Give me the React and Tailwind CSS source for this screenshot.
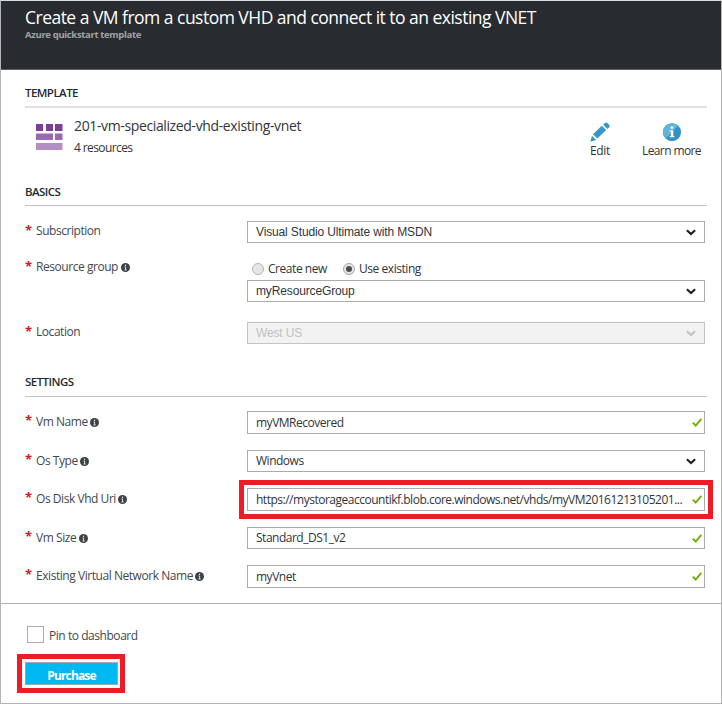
import React from "react";

function InfoDot() {
  return (
    <svg className="ml-[2.5px] h-[9px] w-[9px] shrink-0" viewBox="0 0 9 9">
      <circle cx="4.5" cy="4.5" r="4.5" fill="#3c4247" />
      <path d="M3.5 3.9H4.6V6.9M3.4 7H5.7" stroke="#fff" strokeWidth="0.8" fill="none" />
      <rect x="4" y="1.7" width="1.1" height="1.2" fill="#fff" />
    </svg>
  );
}

function Chevron({ color = "#1c2127" }) {
  return (
    <svg className="mr-2 h-[7px] w-[10px] shrink-0" viewBox="0 0 10 7">
      <path d="M0.9 1.2L5 5L9.1 1.2" fill="none" stroke={color} strokeWidth="2.2" />
    </svg>
  );
}

function Check() {
  return (
    <svg className="mr-[2px] h-[9px] w-[10px] shrink-0" viewBox="0 0 10 9">
      <path d="M0.8 4.6L3.7 7.5L9.3 0.9" fill="none" stroke="#6fb000" strokeWidth="1.9" />
    </svg>
  );
}

function Label({ children, info, low }) {
  return (
    <div
      className={`flex h-[18px] w-[222px] shrink-0 items-center whitespace-nowrap leading-[18px] tracking-[-0.45px] text-[#44484d] ${
        low ? "mt-[2px]" : "mt-px"
      }`}
    >
      <span className={`w-[11px] shrink-0 self-start text-[13px] font-bold text-[#e81123] ${low ? "leading-[15px]" : "leading-4"}`}>*</span>
      <span>{children}</span>
      {info && <InfoDot />}
    </div>
  );
}

function Box({ children, icon, tall, arial, disabled }) {
  return (
    <div
      className={`flex w-[458px] shrink-0 items-center justify-between border pl-2 ${tall ? "h-[23px]" : "h-[22px]"} ${
        disabled ? "border-[#c4c4c4] bg-[#f2f2f2] text-[#c0c2c4]" : "border-[#a9abad] bg-white text-[#30353b]"
      }`}
    >
      <span
        className={`whitespace-nowrap leading-5 ${
          arial ? "font-['Liberation_Sans',sans-serif] text-[12px] tracking-[-0.14px]" : "tracking-[-0.49px]"
        }`}
      >
        {children}
      </span>
      {icon}
    </div>
  );
}

function Heading({ children }) {
  return <h2 className="text-[11.5px] leading-4 font-semibold tracking-[-0.55px] text-[#24292e]">{children}</h2>;
}

export default function App() {
  return (
    <div className="flex h-[704px] w-[722px] flex-col overflow-hidden border border-[#b4b4b4] border-t-[#d5dcdc] bg-white font-['Open_Sans',sans-serif] text-[12px]">
      <header className="h-[69px] shrink-0 border-b border-[#5d6265] bg-[#282c30] pl-6 pt-1">
        <h1 className="text-[17.5px] leading-6 tracking-[-0.52px] text-white">Create a VM from a custom VHD and connect it to an existing VNET</h1>
        <p className="text-[9.5px] leading-[12px] font-bold tracking-[-0.35px] text-[#a0a4a6]">Azure quickstart template</p>
      </header>

      <main className="h-[533px] shrink-0 pl-6">
        <section>
          <div className="h-[38px] w-[682px] border-b-2 border-[#e2e2e2] pt-[15px]">
            <Heading>TEMPLATE</Heading>
          </div>
          <div className="flex h-[75px] items-start pl-[11px] pt-[9px]">
            <svg className="mt-[7px] h-[26px] w-[27px]" viewBox="0 0 27 26">
              <path d="M0 0h7v7H0zM10 0h7v7H10zM19 0h7.5v7H19z" fill="#7b3f98" />
              <path d="M0 9.5h17v6.5H0zM19 9.5h7.5v6.5H19z" fill="#9c68b0" />
              <path d="M0 19h26.5v7H0z" fill="#b48fc4" />
            </svg>
            <div className="ml-[11px] w-[506px] text-[#30353b]">
              <div className="text-[14px] leading-[18px] tracking-[-0.37px]">201-vm-specialized-vhd-existing-vnet</div>
              <div className="mt-1 leading-[18px] tracking-[-0.6px]">4 resources</div>
            </div>
            <div className="mt-[5px] flex w-[40px] flex-col items-center text-[#30353b]">
              <svg className="h-5 w-5" viewBox="0 0 20 20" fill="#3598cc">
                <path d="M0.3 19.7L2 13.7L6 18Z" />
                <path d="M3 12.2L11.8 3.8L16.2 8L7.4 16.6Z" />
                <path d="M13.1 2.7L15 0.9Q16.2 0 17.4 1L19.3 3Q20.2 4.2 19.2 5.3L17.4 7Z" />
              </svg>
              <span className="leading-[18px] tracking-[-0.3px]">Edit</span>
            </div>
            <div className="mt-[5px] ml-[12px] flex w-[79px] flex-col items-center whitespace-nowrap text-[#30353b]">
              <svg className="h-5 w-5" viewBox="0 0 20 20">
                <circle cx="10" cy="10.2" r="9" fill="#2f92c6" />
                <path d="M3.6 16.6A9 9 0 0 1 16.4 3.8Z" fill="#5fb4dc" />
                <circle cx="10" cy="5.6" r="1.4" fill="#fff" />
                <path d="M7.8 8.2H11.3V14H12.4V15.2H7.7V14H8.8V9.4H7.8Z" fill="#fff" />
              </svg>
              <span className="leading-[18px] tracking-[-0.6px]">Learn more</span>
            </div>
          </div>
        </section>

        <section>
          <div className="h-[23px] w-[682px] border-b border-[#c4c4c4] pt-px">
            <Heading>BASICS</Heading>
          </div>
          <div className="flex pt-[15px]">
            <Label>Subscription</Label>
            <Box arial icon={<Chevron />}>Visual Studio Ultimate with MSDN</Box>
          </div>
          <div className="mt-[14px] flex">
            <Label info>Resource group</Label>
            <div>
              <div className="flex h-[23px] items-center pl-[5px] tracking-[-0.45px] text-[#30353b]">
                <span className="h-3 w-3 rounded-full border border-[#b4b4b4] bg-[#e6e6e6]" />
                <span className="ml-1 w-[75px]">Create new</span>
                <span className="flex h-3 w-3 items-center justify-center rounded-full border border-[#a4a4a4] bg-[#e6e6e6]">
                  <span className="h-1.5 w-1.5 rounded-full bg-[#4c4c4c]" />
                </span>
                <span className="ml-1">Use existing</span>
              </div>
              <Box arial icon={<Chevron />}>myResourceGroup</Box>
            </div>
          </div>
          <div className="mt-5 flex">
            <Label>Location</Label>
            <Box arial disabled icon={<Chevron color="#c2c4c6" />}>West US</Box>
          </div>
        </section>

        <section>
          <div className="h-[53px] w-[682px] border-b border-[#c4c4c4] pt-[30px]">
            <Heading>SETTINGS</Heading>
          </div>
          <div className="flex h-[53px] pt-[14px]">
            <Label low info>Vm Name</Label>
            <Box tall icon={<Check />}>myVMRecovered</Box>
          </div>
          <div className="flex h-[38px]">
            <Label low info>Os Type</Label>
            <Box icon={<Chevron />}>Windows</Box>
          </div>
          <div className="flex h-[39px]">
            <Label low info>Os Disk Vhd Uri</Label>
            <div className="-ml-2 -mt-2 h-[39px] w-[474px] shrink-0 border-[5px] border-[#ee1c25] pl-[3px] pt-[3px]">
              <Box tall icon={<Check />}>https://mystorageaccountikf.blob.core.windows.net/vhds/myVM20161213105201...</Box>
            </div>
          </div>
          <div className="flex h-[38px]">
            <Label low info>Vm Size</Label>
            <Box icon={<Check />}>Standard_DS1_v2</Box>
          </div>
          <div className="flex h-[38px]">
            <Label low info>Existing Virtual Network Name</Label>
            <Box tall icon={<Check />}>myVnet</Box>
          </div>
        </section>
      </main>

      <footer className="h-[100px] shrink-0 border-t border-[#b4b4b4] pl-4 pt-[22px]">
        <label className="flex h-[17px] items-center pl-[10px] tracking-[-0.45px] text-[#44484d]">
          <span className="h-[17px] w-[17px] border border-[#a9abad] bg-white" />
          <span className="ml-[5px] pt-[2px]">Pin to dashboard</span>
        </label>
        <div className="mt-[11px] h-[39px] w-[108px] border-[5px] border-[#ee1c25] pl-[3px] pt-[3px]">
          <button className="block h-[23px] w-[93px] border border-[#a3a9ad] bg-[#00b9f2] pt-px text-[12px] leading-[23px] font-bold tracking-[-0.85px] text-white">Purchase</button>
        </div>
      </footer>
    </div>
  );
}
